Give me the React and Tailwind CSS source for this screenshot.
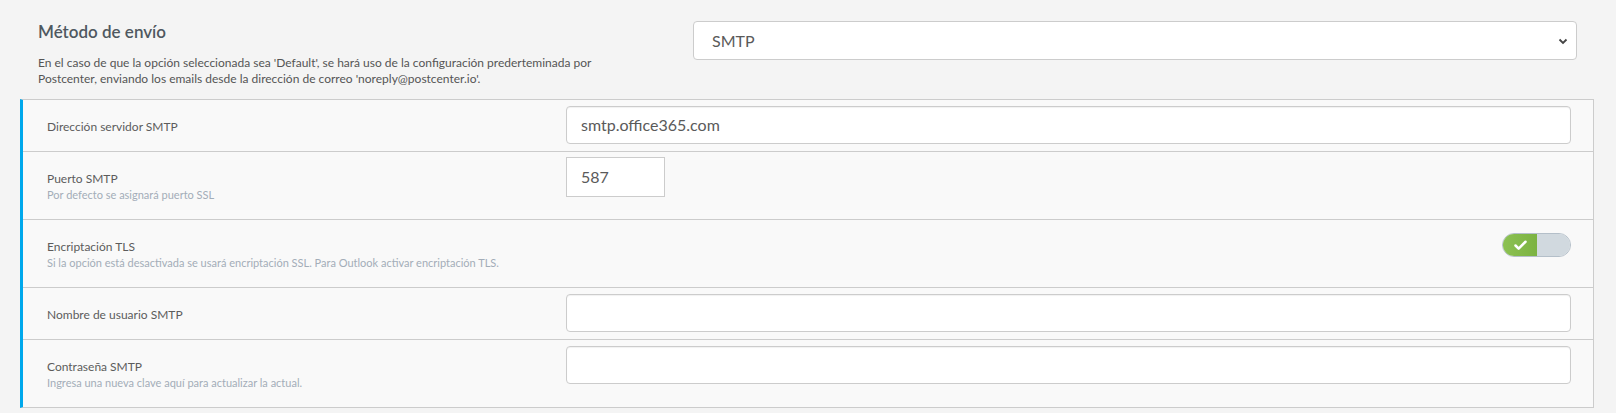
import { Check } from "lucide-react";

function Row({ label, hint, children, last }) {
  return (
    <div className={"flex items-start pl-[24px] pr-[22px]" + (last ? "" : " border-b border-[#cccccc]")}>
      <div className="w-[519px] pt-[18px] pb-[16px]">
        <div className="text-[12px] leading-[17px] text-[#5c5c5c]">{label}</div>
        {hint && <div className="text-[11px] leading-[16px] text-[#a3adb8]">{hint}</div>}
      </div>
      <div className="flex-1 flex">{children}</div>
    </div>
  );
}

function TextInput({ value }) {
  return (
    <div className="mt-[6px] h-[38px] w-full rounded-[4px] border border-[#cccccc] bg-white shadow-[inset_0_1px_1px_rgba(0,0,0,0.06)] pl-[14px] flex items-center text-[16px] text-[#5a5a5a]">
      {value}
    </div>
  );
}

function Toggle() {
  return (
    <div className="mt-[13px] ml-auto h-[24px] w-[69px] rounded-full border border-[#b4bfc9] overflow-hidden flex">
      <div className="w-[34px] h-full bg-gradient-to-r from-[#8cc152] to-[#7cb342] flex items-center justify-center">
        <Check size={15} strokeWidth={4} className="text-white" />
      </div>
      <div className="flex-1 h-full bg-[#d1d9df]" />
    </div>
  );
}

export default function App() {
  return (
    <div className="w-[1616px] h-[413px] bg-[#f4f4f4] font-['Lato','Liberation_Sans',sans-serif] overflow-hidden">
      <div className="flex pt-[21px]">
        <div className="w-[693px] pl-[38px] pr-[80px]">
          <div className="text-[17px] leading-[22px] font-semibold text-[#4f5860]">Método de envío</div>
          <p className="mt-[12px] text-[12px] leading-[16px] text-[#555555]">
            En el caso de que la opción seleccionada sea 'Default', se hará uso de la configuración prederteminada por Postcenter, enviando los emails desde la dirección de correo 'noreply@postcenter.io'.
          </p>
        </div>
        <div className="w-[884px] h-[39px] rounded-[4px] border border-[#cccccc] bg-white flex items-center justify-between pl-[18px] pr-[8px] text-[16px] text-[#5a5a5a]">
          <span>SMTP</span>
          <svg width="10" height="8" viewBox="0 0 10 8">
            <path d="M1.5 2.5 L5 6 L8.5 2.5" fill="none" stroke="#444" strokeWidth="1.8" />
          </svg>
        </div>
      </div>

      <div className="mt-[12px] ml-[20px] w-[1574px] border border-[#cccccc] border-l-[3px] border-l-[#00a8ec] bg-[#f9f9f9]">
        <Row label="Dirección servidor SMTP">
          <TextInput value="smtp.office365.com" />
        </Row>
        <Row label="Puerto SMTP" hint="Por defecto se asignará puerto SSL">
          <div className="mt-[5px] h-[40px] w-[99px] border border-[#cccccc] bg-white pl-[14px] flex items-center text-[16px] text-[#5a5a5a]">
            587
          </div>
        </Row>
        <Row label="Encriptación TLS" hint="Si la opción está desactivada se usará encriptación SSL. Para Outlook activar encriptación TLS.">
          <Toggle />
        </Row>
        <Row label="Nombre de usuario SMTP">
          <TextInput value="" />
        </Row>
        <Row label="Contraseña SMTP" hint="Ingresa una nueva clave aquí para actualizar la actual." last>
          <TextInput value="" />
        </Row>
      </div>
    </div>
  );
}
